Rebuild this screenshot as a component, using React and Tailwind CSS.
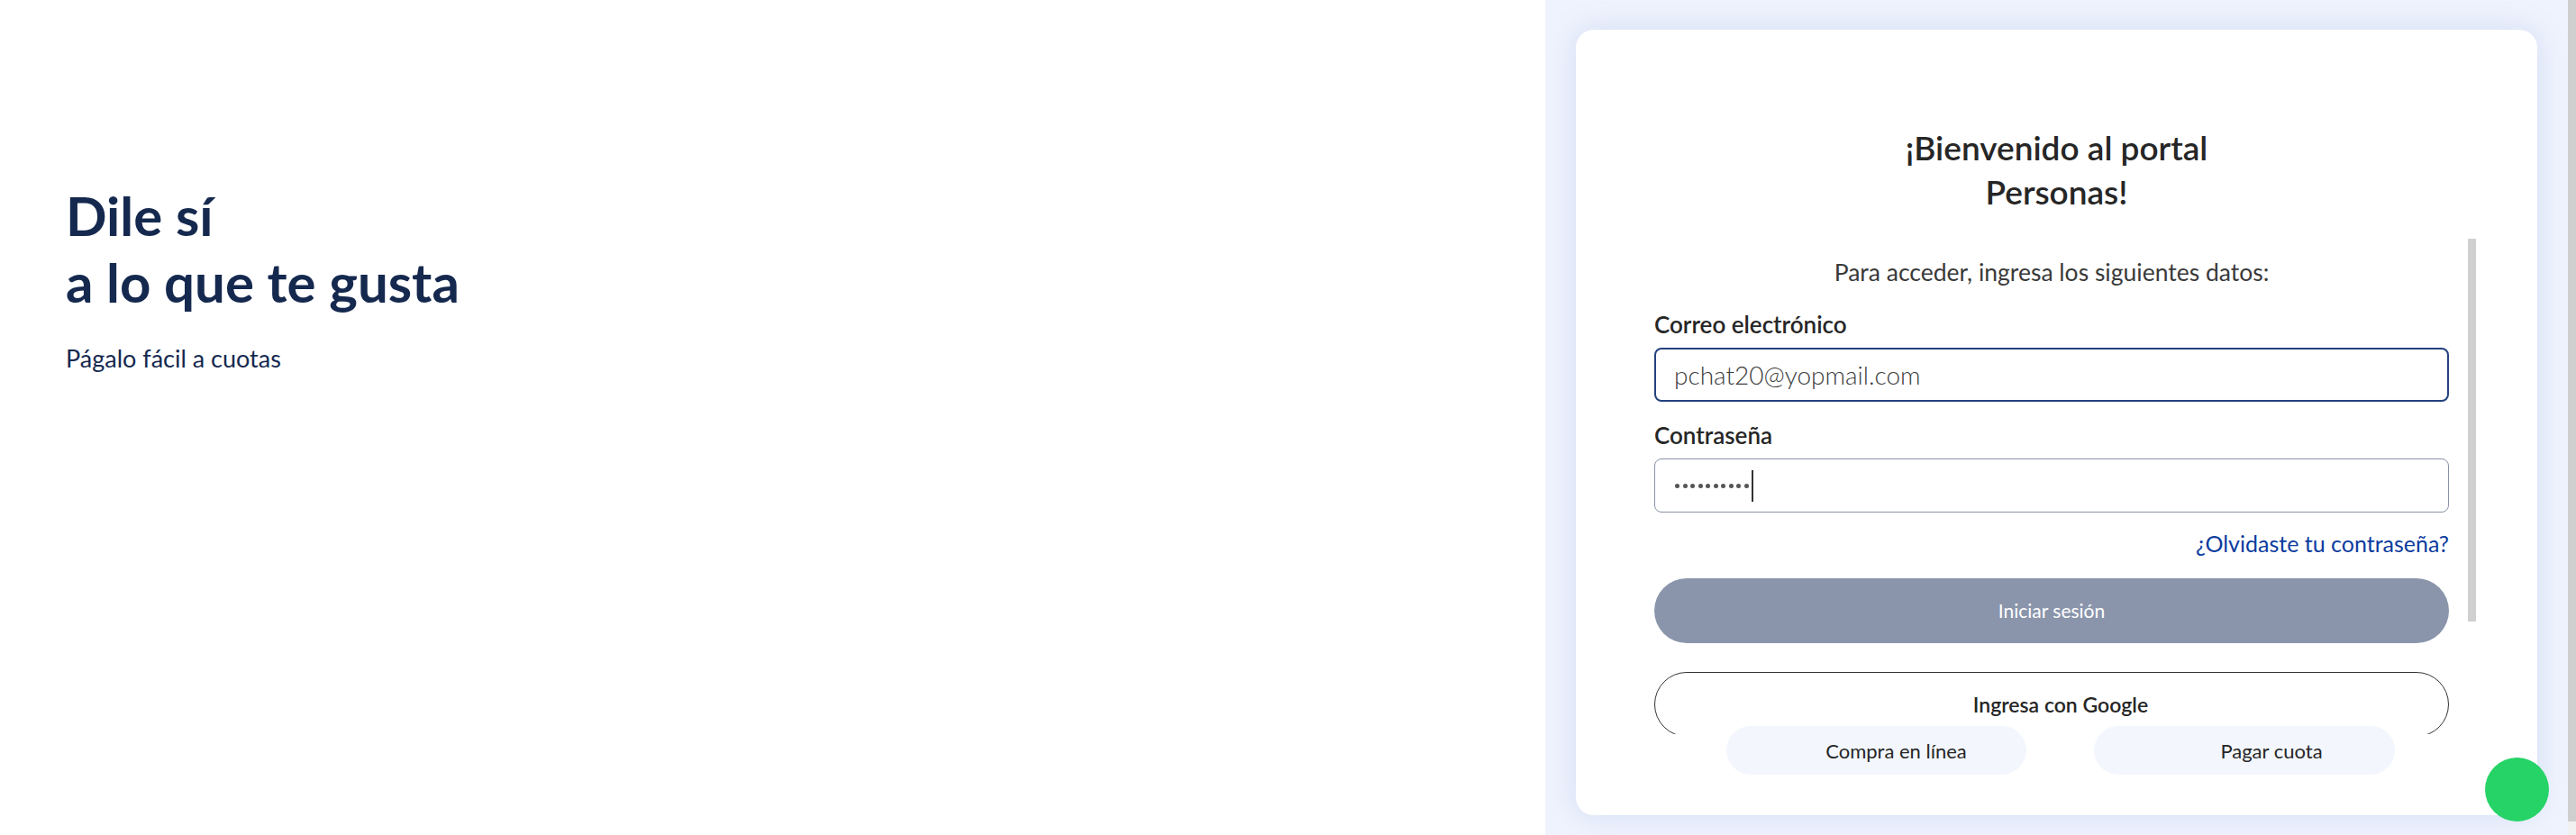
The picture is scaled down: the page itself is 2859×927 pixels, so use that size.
import React from "react";

const Dots = ({ count }) => {
  const dots = Array.from({ length: count });
  return (
    <div className="flex items-center gap-[3.5px]">
      {dots.map((_, i) => (
        <span key={i} className="block w-[5px] h-[5px] rounded-full bg-[#555]" />
      ))}
    </div>
  );
};

const App = () => {
  return (
    <div className="flex h-[927px] w-[2859px] overflow-hidden bg-white font-['Lato',sans-serif]">
      {/* LEFT */}
      <div className="w-[1715px] pl-[73px] pt-[202px] text-[#15294f]">
        <h1 className="text-[60px] leading-[74px] font-bold">
          Dile sí
          <br />
          a lo que te gusta
        </h1>
        <p className="mt-[32px] text-[27px] leading-[32px] font-normal">
          Págalo fácil a cuotas
        </p>
      </div>

      {/* RIGHT */}
      <div className="relative flex-1 bg-[#eff3fd] px-[34px] pt-[33px] pb-[22px]">
        <div className="h-full rounded-[20px] bg-white shadow-[0_0_32px_rgba(110,140,210,0.22)] pt-[106px] flex flex-col">
          <h2 className="text-center text-[37px] leading-[49px] font-semibold text-[#262626]">
            ¡Bienvenido al portal
            <br />
            Personas!
          </h2>

          {/* scroll area */}
          <div className="mt-[28px] h-[550px] flex pl-[87px] pr-[68px] gap-[21px]">
            <div className="flex-1 overflow-hidden">
              <p className="pt-[22px] text-center text-[26.5px] leading-[30px] font-normal text-[#3a3a3a]">
                Para acceder, ingresa los siguientes datos:
              </p>

              <label className="block mt-[29px] text-[26px] leading-[28px] font-semibold text-[#262626]">
                Correo electrónico
              </label>
              <input
                type="text"
                readOnly
                value="pchat20@yopmail.com"
                className="mt-[12px] w-full h-[60px] rounded-[8px] border-2 border-[#23427e] px-[20px] text-[28px] font-light text-[#3d3d3d] outline-none"
              />

              <label className="block mt-[23px] text-[26px] leading-[28px] font-semibold text-[#262626]">
                Contraseña
              </label>
              <div className="mt-[12px] w-full h-[60px] rounded-[8px] border border-[#8a93a6] pl-[22px] flex items-center">
                <Dots count={10} />
                <span className="ml-[3px] block w-[2px] h-[35px] bg-[#333]" />
              </div>

              <div className="mt-[20px] text-right">
                <a className="text-[25px] leading-[28px] text-[#0b3c9e] cursor-pointer">
                  ¿Olvidaste tu contraseña?
                </a>
              </div>

              <button className="mt-[23px] w-full h-[72px] rounded-full bg-[#8a95ab] text-white text-[21px] font-normal">
                Iniciar sesión
              </button>

              <button className="mt-[32px] w-full h-[72px] rounded-full border border-[#333] bg-white pl-[20px] text-[#262626] text-[23px] font-semibold">
                Ingresa con Google
              </button>
            </div>
            <div className="w-[9px]">
              <div className="h-[425px] bg-[#d0d0d0]" />
            </div>
          </div>

          {/* quick links */}
          <div className="-mt-[9px] flex justify-center gap-[75px] pl-[9px]">
            <button className="w-[333px] h-[54px] rounded-full bg-[#f3f6fd] pl-[44px] text-[22px] text-[#262626]">
              Compra en línea
            </button>
            <button className="w-[334px] h-[54px] rounded-full bg-[#f3f6fd] pl-[60px] text-[22px] text-[#262626]">
              Pagar cuota
            </button>
          </div>
        </div>

        <div className="absolute right-[21px] bottom-[15px] w-[71px] h-[71px] rounded-full bg-[#26d367]" />
      </div>

      {/* page scrollbar */}
      <div className="w-[9px] flex flex-col">
        <div className="h-[912px] bg-[#cfcfcf]" />
        <div className="flex-1 bg-[#f1f1f1]" />
      </div>
    </div>
  );
};

export default App;
